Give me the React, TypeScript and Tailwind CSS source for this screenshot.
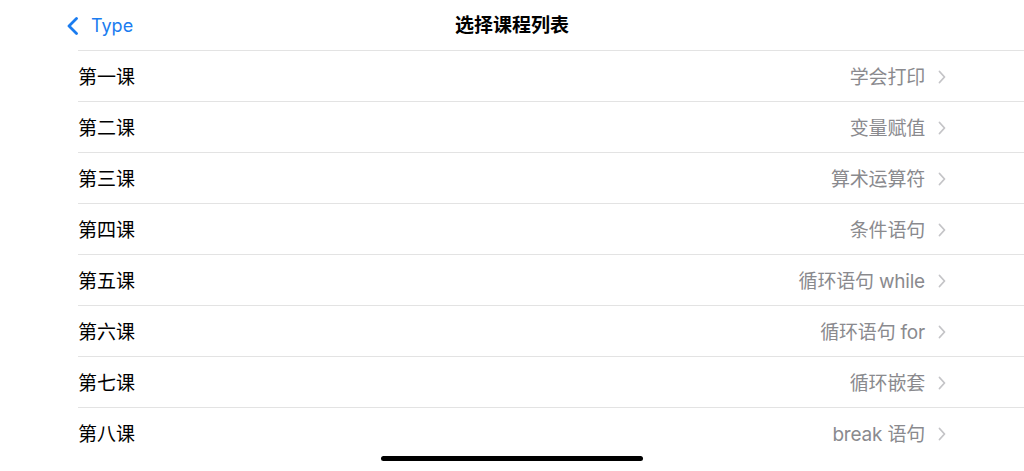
import React from "react";

const rows: [string, string][] = [
  ["第一课", "学会打印"],
  ["第二课", "变量赋值"],
  ["第三课", "算术运算符"],
  ["第四课", "条件语句"],
  ["第五课", "循环语句 while"],
  ["第六课", "循环语句 for"],
  ["第七课", "循环嵌套"],
  ["第八课", "break 语句"],
];

const font = { fontFamily: 'Inter, "Noto Sans CJK SC", sans-serif' };

export default function App() {
  return (
    <div className="relative w-[1024px] h-[471px] overflow-hidden bg-white" style={font}>
      <div className="relative h-[50px] flex items-center">
        <div className="flex items-center pl-[66px] pt-[1px] text-[#1a7cf0]">
          <svg width="13" height="18" viewBox="0 0 13 18" fill="none">
            <path d="M10.5 1.5 L3 9 L10.5 16.5" stroke="#1a7cf0" strokeWidth="2.8" strokeLinecap="round" strokeLinejoin="round" />
          </svg>
          <span className="ml-[12px] text-[18px] leading-none">Type</span>
        </div>
        <div className="absolute left-0 right-0 top-0 h-[50px] pt-[1px] flex items-center justify-center pointer-events-none">
          <span className="text-[19px] font-semibold text-black leading-none">选择课程列表</span>
        </div>
      </div>
      <div className="ml-[78px]">
        {rows.map(([l, r]) => (
          <div key={l} className="h-[51px] border-t border-[#e3e3e3] pt-[2px] flex items-center justify-between pr-[78px]">
            <span className="text-[19px] text-black leading-none">{l}</span>
            <div className="flex items-center">
              <span className="text-[19px] text-[#8a8a8e] leading-none tracking-[-0.2px]">{r}</span>
              <svg className="ml-[13px]" width="8" height="14" viewBox="0 0 8 14" fill="none">
                <path d="M1.5 1.5 L6.5 7 L1.5 12.5" stroke="#c4c4c7" strokeWidth="1.8" strokeLinecap="round" strokeLinejoin="round" />
              </svg>
            </div>
          </div>
        ))}
      </div>
      <div className="absolute left-[381px] bottom-[10px] w-[262px] h-[5px] rounded-full bg-black" />
    </div>
  );
}
